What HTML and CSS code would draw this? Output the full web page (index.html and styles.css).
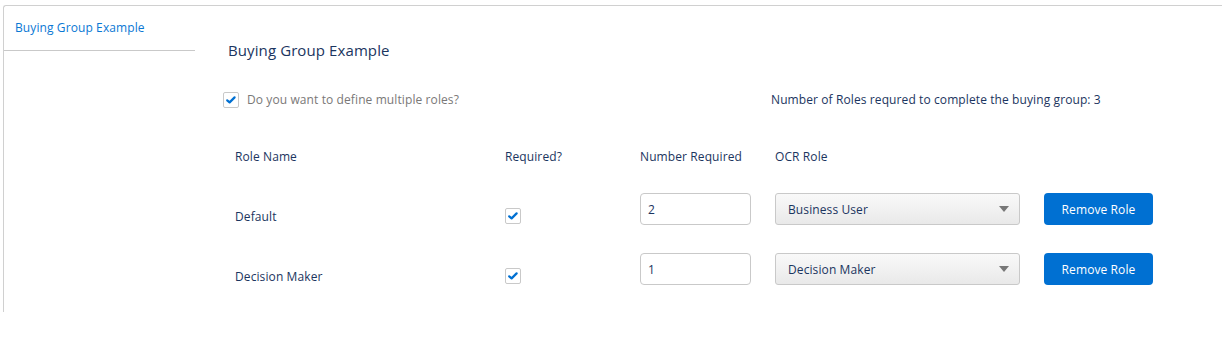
FILE: index.html
```html
<!DOCTYPE html>
<html lang="en">
<head>
<meta charset="utf-8">
<title>Buying Group Example</title>
<link rel="stylesheet" href="styles.css">
</head>
<body>
<div class="panel">
  <nav class="sidebar">
    <div class="tab">Buying Group Example</div>
  </nav>
  <main class="content">
    <h1 class="title">Buying Group Example</h1>
    <div class="options">
      <label class="opt">
        <span class="cb"><svg viewBox="0 0 16 16" width="16" height="16"><path d="M4.2 8.3 L6.6 10.4 L11.6 5.4" fill="none" stroke="#0070d2" stroke-width="2.2" stroke-linecap="round" stroke-linejoin="round"/></svg></span>
        <span class="opt-text">Do you want to define multiple roles?</span>
      </label>
      <div class="count">Number of Roles requred to complete the buying group: 3</div>
    </div>
    <div class="table">
      <div class="row head">
        <div>Role Name</div>
        <div>Required?</div>
        <div>Number Required</div>
        <div>OCR Role</div>
        <div></div>
      </div>
      <div class="row">
        <div class="name">Default</div>
        <div class="req"><span class="cb"><svg viewBox="0 0 16 16" width="16" height="16"><path d="M4.2 8.3 L6.6 10.4 L11.6 5.4" fill="none" stroke="#0070d2" stroke-width="2.2" stroke-linecap="round" stroke-linejoin="round"/></svg></span></div>
        <div><div class="input">2</div></div>
        <div><div class="select"><span>Business User</span><span class="caret"></span></div></div>
        <div><button class="btn">Remove Role</button></div>
      </div>
      <div class="row">
        <div class="name">Decision Maker</div>
        <div class="req"><span class="cb"><svg viewBox="0 0 16 16" width="16" height="16"><path d="M4.2 8.3 L6.6 10.4 L11.6 5.4" fill="none" stroke="#0070d2" stroke-width="2.2" stroke-linecap="round" stroke-linejoin="round"/></svg></span></div>
        <div><div class="input">1</div></div>
        <div><div class="select"><span>Decision Maker</span><span class="caret"></span></div></div>
        <div><button class="btn">Remove Role</button></div>
      </div>
    </div>
  </main>
</div>
</body>
</html>
```

FILE: styles.css
```css
* { box-sizing: border-box; }
html, body { margin: 0; padding: 0; background: #fff; }
body {
  font-family: "Open Sans", "Noto Sans", sans-serif;
  font-size: 12px;
  letter-spacing: 0.1px;
  color: #1b3560;
}
.panel {
  margin: 5px 0 0 3px;
  width: 1219px;
  height: 307px;
  border-top: 1px solid #d0d0d0;
  border-left: 1px solid #d0d0d0;
  border-top-left-radius: 3px;
  display: flex;
}
.sidebar {
  width: 191px;
  flex: none;
}
.tab {
  height: 45px;
  border-bottom: 1px solid #c9c9c9;
  padding: 14px 0 0 11px;
  color: #0a78d4;
  font-size: 12px;
  line-height: 16px;
}
.content {
  flex: 1;
  padding: 34px 0 0 33px;
}
.title {
  margin: 0;
  font-size: 15px;
  font-weight: normal;
  line-height: 20px;
  color: #1b3560;
}
.options {
  margin: 32px 0 0 -5px;
  display: grid;
  grid-template-columns: 548px auto;
  align-items: center;
  height: 16px;
}
.opt {
  display: flex;
  align-items: center;
  gap: 8px;
}
.opt-text { color: #7a7877; line-height: 16px; }
.count { line-height: 16px; }
.cb {
  display: block;
  width: 16px;
  height: 16px;
  border: 1px solid #c9c9c9;
  border-radius: 2px;
  background: #fff;
  position: relative;
}
.cb svg { position: absolute; left: -1px; top: -1px; }
.table {
  margin: 41px 0 0 7px;
  display: flex;
  flex-direction: column;
  gap: 28px;
}
.row {
  display: grid;
  grid-template-columns: 270px 135px 135px 269px 109px;
  align-items: center;
  height: 32px;
}
.row.head {
  height: 16px;
  line-height: 16px;
}
.name, .req { margin-top: 14px; line-height: 16px; }
.name { padding-top: 1px; }
.input {
  width: 111px;
  height: 32px;
  border: 1px solid #c9c9c9;
  border-radius: 4px;
  background: #fff;
  padding: 1px 7px 0;
  line-height: 30px;
}
.select {
  width: 245px;
  height: 32px;
  border: 1px solid #c9c9c9;
  border-radius: 3px;
  background: linear-gradient(#f9f9f9, #e9e9e9);
  padding: 1px 10px 0 12px;
  line-height: 30px;
  display: flex;
  justify-content: space-between;
  align-items: center;
}
.caret {
  width: 0;
  height: 0;
  margin-top: -1px;
  border-left: 5px solid transparent;
  border-right: 5px solid transparent;
  border-top: 6px solid #777;
}
.btn {
  width: 109px;
  height: 32px;
  border: 0;
  border-radius: 4px;
  background: #0070d2;
  color: #fff;
  font-family: inherit;
  font-size: 12px;
  letter-spacing: 0.1px;
  padding: 0;
}
```
